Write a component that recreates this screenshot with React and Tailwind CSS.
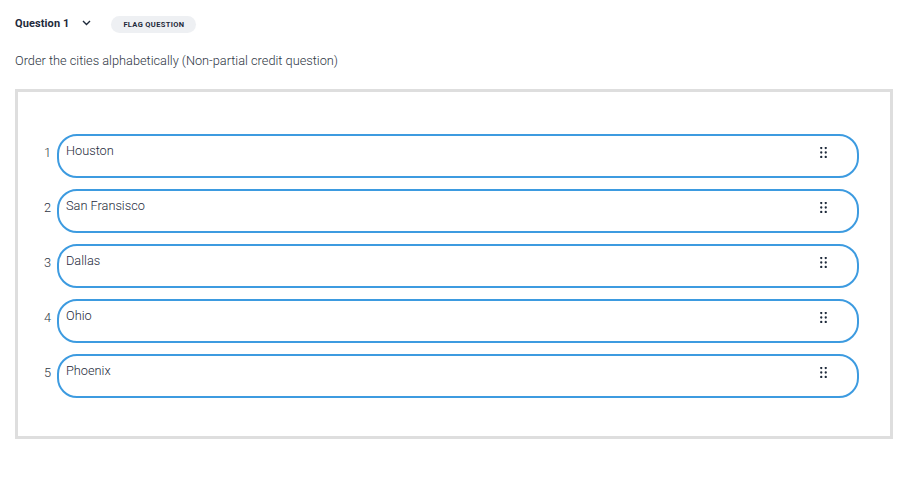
import React from 'react';

const cities = ['Houston', 'San Fransisco', 'Dallas', 'Ohio', 'Phoenix'];

function DragDots() {
  return (
    <svg width="7" height="11" viewBox="0 0 7 11" className="text-[#1e2a3b]">
      {[1, 5.5, 10].map((cy) =>
        [1.25, 5.75].map((cx) => (
          <circle key={`${cx}-${cy}`} cx={cx} cy={cy} r="1.15" fill="currentColor" />
        ))
      )}
    </svg>
  );
}

export default function App() {
  return (
    <div className="w-[910px] h-[478px] bg-white font-['Roboto',sans-serif] text-[#1e2a3b]">
      {/* header */}
      <div className="flex items-center pl-[15px] pt-[16px] h-[33px]">
        <span className="text-[11px] font-bold tracking-[0.1px]">Question 1</span>
        <svg width="9" height="6" viewBox="0 0 9 6" className="ml-[13px] -mt-[3px]">
          <path d="M1 1l3.5 3.5L8 1" fill="none" stroke="#1e2a3b" strokeWidth="1.4" />
        </svg>
        <span className="ml-[20px] h-[17px] px-[12px] rounded-full bg-[#eef0f3] text-[7.5px] font-bold flex items-center tracking-[0.35px]">
          FLAG QUESTION
        </span>
      </div>

      <p className="pl-[15px] mt-[20px] text-[12.75px] font-light text-[#2e3644] leading-[16px]">
        Order the cities alphabetically (Non-partial credit question)
      </p>

      <div className="ml-[15px] mt-[20px] w-[878px] border-[3px] border-[#dedede] pt-[42px] pb-[38px] pl-[25px] pr-[31px] flex flex-col gap-[11px]">
        {cities.map((city, i) => (
          <div key={city} className="flex items-start">
            <span className="w-[14px] text-[12.75px] font-light text-[#2e3644] pt-[9px] text-right pr-[6px]">{i + 1}</span>
            <div className="flex-1 h-[44px] border-2 border-[#3d9be0] rounded-[20px] flex items-start justify-between pl-[7px] pr-[30px] pt-[7px]">
              <span className="text-[12.75px] font-light leading-[16px] text-[#1e2a3b]">{city}</span>
              <span className="mt-[4px]"><DragDots /></span>
            </div>
          </div>
        ))}
      </div>
    </div>
  );
}
